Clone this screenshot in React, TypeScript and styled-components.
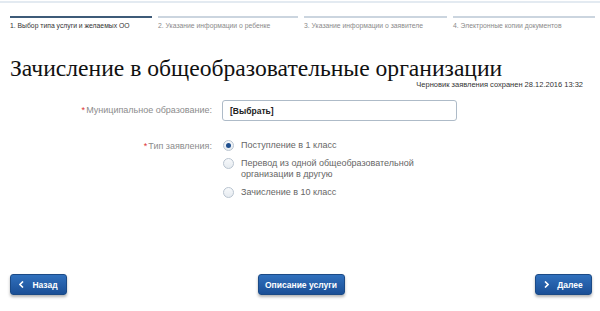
import styled, { createGlobalStyle } from "styled-components";

const GlobalStyle = createGlobalStyle`
  body {
    margin: 0;
    background: #fff;
    font-family: Arial, "Liberation Sans", sans-serif;
  }
`;

const Page = styled.div`
  width: 600px;
  height: 311px;
  display: flex;
  flex-direction: column;
  border-top: 2px solid #e3eaf1;
  margin-top: 1px;
  box-sizing: border-box;
  overflow: hidden;
`;

const Steps = styled.div`
  display: grid;
  grid-template-columns: 142px 140px 143px 142px;
  column-gap: 6px;
  padding: 13px 0 0 10px;
`;

const Step = styled.div<{ $active?: boolean }>`
  border-top: 2px solid ${(p) => (p.$active ? "#3e5b78" : "#cbd5df")};
  padding-top: 4px;
  font-size: 6.8px;
  color: ${(p) => (p.$active ? "#333" : "#8a8a8a")};
  white-space: nowrap;
`;

const Header = styled.div`
  display: flex;
  flex-direction: column;
  padding: 26px 17px 0 10px;
`;

const Title = styled.h1`
  margin: 0;
  font-family: "Liberation Serif", serif;
  font-weight: normal;
  font-size: 23.6px;
  line-height: 27px;
  color: #111;
`;

const Saved = styled.div`
  align-self: flex-end;
  margin-top: -2px;
  font-size: 7.5px;
  color: #333;
`;

const Form = styled.div`
  display: grid;
  grid-template-columns: 212px 1fr;
  column-gap: 10px;
  row-gap: 19px;
  margin-top: 11px;
`;

const Label = styled.div<{ $top?: number }>`
  text-align: right;
  font-size: 9px;
  color: #8c8c8c;
  padding-top: ${(p) => p.$top ?? 0}px;
`;

const Star = styled.span`
  color: #d33;
  margin-right: 1px;
`;

const Select = styled.div`
  width: 235px;
  height: 21px;
  box-sizing: border-box;
  border: 1px solid #aebbc8;
  border-radius: 3px;
  display: flex;
  align-items: center;
  padding-left: 7px;
  font-size: 8.5px;
  font-weight: bold;
  color: #222;
`;

const Radios = styled.div`
  display: flex;
  flex-direction: column;
  gap: 7px;
`;

const RadioRow = styled.div`
  display: flex;
  align-items: flex-start;
  gap: 7px;
  font-size: 9px;
  line-height: 11px;
  color: #666;
`;

const RadioCircle = styled.span<{ $checked?: boolean }>`
  flex: none;
  width: 11px;
  height: 11px;
  border-radius: 50%;
  box-sizing: border-box;
  border: 1px solid #b9c4d0;
  background: linear-gradient(#f7f9fb, #e6ebf0);
  display: flex;
  align-items: center;
  justify-content: center;
  margin-left: 1px;

  &::after {
    content: "";
    width: 5px;
    height: 5px;
    border-radius: 50%;
    background: ${(p) => (p.$checked ? "#1f4f8f" : "transparent")};
  }
`;

const Footer = styled.div`
  margin-top: auto;
  display: flex;
  justify-content: space-between;
  align-items: center;
  padding: 0 8px 17px 10px;
`;

const Button = styled.button<{ $w: number }>`
  width: ${(p) => p.$w}px;
  height: 21px;
  border: 1px solid #1b4a86;
  border-radius: 3px;
  background: linear-gradient(#3070bd, #1b4f96);
  box-shadow: 0 2px 3px rgba(0, 0, 0, 0.3);
  color: #fff;
  font-family: Arial, "Liberation Sans", sans-serif;
  font-size: 8.5px;
  font-weight: bold;
  display: flex;
  align-items: center;
  justify-content: center;
  gap: 8px;
  padding: 0;
  cursor: pointer;
`;

const Chevron = ({ dir }: { dir: "left" | "right" }) => (
  <svg width="5" height="7" viewBox="0 0 5 7">
    <path
      d={dir === "left" ? "M4 0.5 L1 3.5 L4 6.5" : "M1 0.5 L4 3.5 L1 6.5"}
      fill="none"
      stroke="#fff"
      strokeWidth="1.6"
    />
  </svg>
);

export default function App() {
  return (
    <>
      <GlobalStyle />
      <Page>
        <Steps>
          <Step $active>1. Выбор типа услуги и желаемых ОО</Step>
          <Step>2. Указание информации о ребенке</Step>
          <Step>3. Указание информации о заявителе</Step>
          <Step>4. Электронные копии документов</Step>
        </Steps>

        <Header>
          <Title>Зачисление в общеобразовательные организации</Title>
          <Saved>Черновик заявления сохранен 28.12.2016 13:32</Saved>
        </Header>

        <Form>
          <Label $top={5}>
            <Star>*</Star>Муниципальное образование:
          </Label>
          <Select>[Выбрать]</Select>

          <Label $top={1}>
            <Star>*</Star>Тип заявления:
          </Label>
          <Radios>
            <RadioRow>
              <RadioCircle $checked />
              <span>Поступление в 1 класс</span>
            </RadioRow>
            <RadioRow>
              <RadioCircle />
              <span>
                Перевод из одной общеобразовательной
                <br />
                организации в другую
              </span>
            </RadioRow>
            <RadioRow>
              <RadioCircle />
              <span>Зачисление в 10 класс</span>
            </RadioRow>
          </Radios>
        </Form>

        <Footer>
          <Button $w={57}>
            <Chevron dir="left" />
            Назад
          </Button>
          <Button $w={87}>Описание услуги</Button>
          <Button $w={57}>
            <Chevron dir="right" />
            Далее
          </Button>
        </Footer>
      </Page>
    </>
  );
}
